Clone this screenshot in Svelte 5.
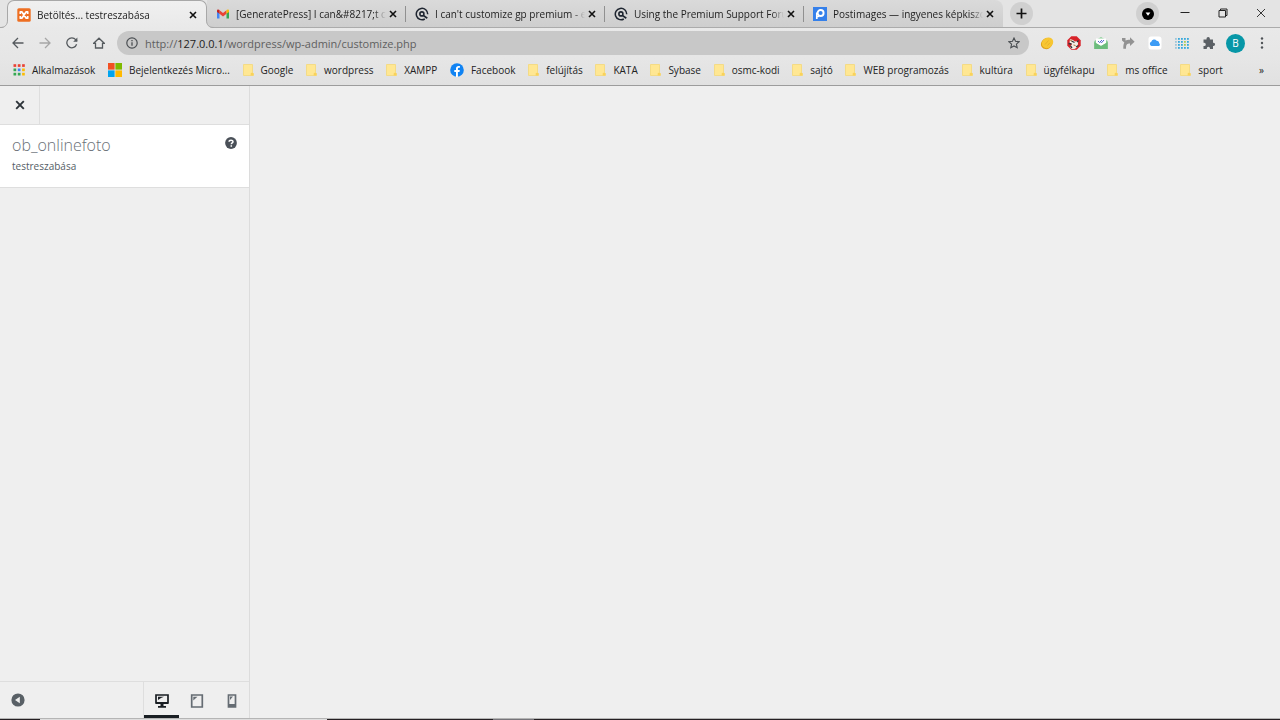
<script lang="ts">
  /**
   * App.svelte — Browser window with the WordPress customizer loading.
   *
   * Tab strip, toolbar and bookmarks bar on top, customizer sidebar
   * with an empty preview pane below.
   */

  type Tab = { title: string; icon: string };
  type Bookmark = { label: string; icon: string };

  const TABS: Tab[] = [
    { title: "Betöltés... testreszabása", icon: "xampp" },
    { title: "[GeneratePress] I can&#8217;t cu", icon: "gmail" },
    { title: "I can't customize gp premium - e", icon: "gp" },
    { title: "Using the Premium Support Foru", icon: "gp" },
    { title: "Postimages — ingyenes képkiszo", icon: "post" },
  ];

  const BOOKMARKS: Bookmark[] = [
    { label: "Alkalmazások", icon: "apps" },
    { label: "Bejelentkezés Micro...", icon: "microsoft" },
    { label: "Google", icon: "folder" },
    { label: "wordpress", icon: "folder" },
    { label: "XAMPP", icon: "folder" },
    { label: "Facebook", icon: "facebook" },
    { label: "felújítás", icon: "folder" },
    { label: "KATA", icon: "folder" },
    { label: "Sybase", icon: "folder" },
    { label: "osmc-kodi", icon: "folder" },
    { label: "sajtó", icon: "folder" },
    { label: "WEB programozás", icon: "folder" },
    { label: "kultúra", icon: "folder" },
    { label: "ügyfélkapu", icon: "folder" },
    { label: "ms office", icon: "folder" },
    { label: "sport", icon: "folder" },
  ];

  const APP_COLORS = [
    "#ea4335", "#ea4335", "#ea4335",
    "#34a853", "#4285f4", "#fbbc05",
    "#34a853", "#34a853", "#fbbc05",
  ];

  const DEVICES = ["desktop", "tablet", "mobile"] as const;

  let activeTab = $state(0);
  let device    = $state<string>("desktop");
  let url       = $state("/wordpress/wp-admin/customize.php");
</script>

{#snippet cross()}
  <svg width="8" height="8" viewBox="0 0 8 8" aria-hidden="true">
    <path d="M1 1l6 6M7 1L1 7" stroke="currentColor" stroke-width="1.6" fill="none" />
  </svg>
{/snippet}

{#snippet favicon(name: string)}
  {#if name === "xampp"}
    <svg width="14" height="14" viewBox="0 0 14 14" aria-hidden="true">
      <rect x="0.3" y="0.3" width="13.4" height="13.4" rx="1.5" fill="#ee6f22" />
      <path d="M3.300 6V3.800h1.500L9.200 10.200h1.500V8M3.300 8v2.200h1.500L9.200 3.800h1.500V6" fill="none" stroke="#fff" stroke-width="1.700" stroke-linejoin="round" />
    </svg>
  {:else if name === "gmail"}
    <svg width="14" height="14" viewBox="0 0 14 14" aria-hidden="true">
      <path d="M1 3.500v8h2.500V6z" fill="#4285f4" />
      <path d="M13 3.500v8h-2.500V6z" fill="#34a853" />
      <path d="M3.500 3.200L7 6l3.500-2.800v3.600L7 9.500 3.500 6.800z" fill="#ea4335" />
      <path d="M1 5V3.700C1 2.200 2.500 2 3.500 3v3.800z" fill="#c5221f" />
      <path d="M13 5V3.700c0-1.500-1.500-1.700-2.500-.7v3.800z" fill="#fbbc04" />
    </svg>
  {:else if name === "gp"}
    <svg width="14" height="14" viewBox="0 0 14 14" fill="none" stroke="#1e2530" aria-hidden="true">
      <path d="M9.800 12A5.700 5.700 0 1 1 12.700 7.200" stroke-width="1.500" />
      <circle cx="6.900" cy="6.900" r="2" stroke-width="1.600" />
      <path d="M8.300 8.400l4 2.900" stroke-width="1.700" />
    </svg>
  {:else if name === "post"}
    <svg width="14" height="14" viewBox="0 0 14 14" aria-hidden="true">
      <rect width="14" height="14" fill="#3580ea" />
      <circle cx="7.600" cy="6" r="3" fill="none" stroke="#fff" stroke-width="1.900" />
      <path d="M3.800 5.500V12" stroke="#fff" stroke-width="1.700" />
      <path d="M3.500 9.500h3" stroke="#fff" stroke-width="1.300" />
    </svg>
  {:else if name === "apps"}
    <svg width="12" height="12" viewBox="0 0 12 12" aria-hidden="true">
      {#each APP_COLORS as color, i}
        <rect x={(i % 3) * 4.3 + 0.5} y={Math.floor(i / 3) * 4.3 + 0.2} width="2.700" height="2.700" fill={color} />
      {/each}
    </svg>
  {:else if name === "microsoft"}
    <svg width="14" height="14" viewBox="0 0 14 14" aria-hidden="true">
      <rect width="6.600" height="6.600" fill="#f25022" />
      <rect x="7.400" width="6.600" height="6.600" fill="#7fba00" />
      <rect y="7.400" width="6.600" height="6.600" fill="#00a4ef" />
      <rect x="7.400" y="7.400" width="6.600" height="6.600" fill="#ffb900" />
    </svg>
  {:else if name === "facebook"}
    <svg width="14" height="14" viewBox="0 0 14 14" aria-hidden="true">
      <circle cx="7" cy="7" r="6.800" fill="#1083f3" />
      <path d="M6 14V9.100H4.300V7.100H6V5.600c0-1.800 1-2.700 2.600-2.700.7 0 1.300.1 1.300.1v1.700H9c-.8 0-1.100.5-1.100 1v1.400h1.900l-.3 2H7.900V14z" fill="#fff" />
    </svg>
  {:else}
    <svg width="11" height="12" viewBox="0 0 11 12" aria-hidden="true">
      <path d="M.5.500h9v8l.9.900v2.100H.5z" fill="#ffe793" stroke="#f4d878" stroke-width="0.800" />
      <path d="M7.700 11.500V9.200l1.500-.8 1.300 1v2.100z" fill="#f9d25a" />
    </svg>
  {/if}
{/snippet}

<div class="window">
  <header class="browser">
    <div class="tab-strip">
      {#each TABS as tab, i}
        <div class="tab" class:active={activeTab === i}>
          {#if activeTab === i}
            <svg class="flare left" width="8" height="8" viewBox="0 0 8 8" aria-hidden="true">
              <path d="M0 8C5 8 7.500 5.500 7.500 0H8v8z" fill="#e9e9e9" />
              <path d="M0 7.500C5 7.500 7.500 5 7.500 0" fill="none" stroke="#a8a8a8" />
            </svg>
            <svg class="flare right" width="8" height="8" viewBox="0 0 8 8" aria-hidden="true">
              <path d="M8 8C3 8 .5 5.500.5 0H0v8z" fill="#e9e9e9" />
              <path d="M8 7.500C3 7.500.5 5 .5 0" fill="none" stroke="#a8a8a8" />
            </svg>
          {/if}
          <button class="tab-title" onclick={() => (activeTab = i)}>
            {@render favicon(tab.icon)}
            <span>{tab.title}</span>
          </button>
          <button class="tab-close" aria-label="Lap bezárása">{@render cross()}</button>
        </div>
      {/each}
      <button class="new-tab" aria-label="Új lap">
        <svg width="11" height="11" viewBox="0 0 11 11" aria-hidden="true">
          <path d="M5.500.500v10M.5 5.500h10" stroke="#111" stroke-width="1.700" />
        </svg>
      </button>
      <div class="window-controls">
        <button class="tab-search" aria-label="Lapok keresése">
          <svg width="12" height="12" viewBox="0 0 12 12" aria-hidden="true">
            <circle cx="6" cy="6" r="6" fill="#000" />
            <path d="M3.600 4.500h4.800L6 7.700z" fill="#fff" />
          </svg>
        </button>
        <button aria-label="Kis méret">
          <svg width="10" height="10" viewBox="0 0 10 10"><path d="M.5 4.500h9" stroke="#222" /></svg>
        </button>
        <button aria-label="Előző méret">
          <svg width="10" height="10" viewBox="0 0 10 10" fill="none" stroke="#222">
            <path d="M1 2.500h6.500v6.500H1zM2.500 2.500V1H9v6.500H7.500" />
          </svg>
        </button>
        <button aria-label="Bezárás">
          <svg width="10" height="10" viewBox="0 0 10 10"><path d="M1 1l8 8M9 1L1 9" stroke="#222" stroke-width="0.900" /></svg>
        </button>
      </div>
    </div>

    <div class="toolbar">
      <nav class="nav-buttons">
        <button aria-label="Vissza">
          <svg width="12" height="12" viewBox="0 0 12 12" fill="none" stroke="#555a5e" stroke-width="1.300">
            <path d="M11.500 6H1.200M6 1L1 6l5 5" />
          </svg>
        </button>
        <button aria-label="Előre" disabled>
          <svg width="12" height="12" viewBox="0 0 12 12" fill="none" stroke="#a6a6a6" stroke-width="1.300">
            <path d="M.5 6h10.300M6 1l5 5-5 5" />
          </svg>
        </button>
        <button aria-label="Újratöltés">
          <svg width="12" height="12" viewBox="0 0 12 12" fill="none" stroke="#555a5e" stroke-width="1.300">
            <path d="M10.600 7.300A5 5 0 1 1 9.700 2.600L11 4" />
            <path d="M11.400.500v4.200H7.200z" fill="#555a5e" stroke="none" />
          </svg>
        </button>
        <button aria-label="Kezdőlap">
          <svg width="12" height="12" viewBox="0 0 12 12" fill="none" stroke="#555a5e" stroke-width="1.300">
            <path d="M.7 6.300L6 1.200l5.300 5.100H9.500V11h-7V6.300z" />
          </svg>
        </button>
      </nav>

      <div class="address">
        <svg width="12" height="12" viewBox="0 0 12 12" fill="none" stroke="#4a4e52" aria-hidden="true">
          <circle cx="6" cy="6" r="5.200" stroke-width="1.200" />
          <path d="M6 5.300v3.500M6 3v1.300" stroke-width="1.300" />
        </svg>
        <label for="url">http://<b>127.0.0.1</b></label>
        <input id="url" type="text" bind:value={url} spellcheck="false" />
        <button aria-label="Könyvjelző">
          <svg width="12" height="12" viewBox="0 0 12 12" fill="none" stroke="#4a4e52" stroke-width="1.100">
            <path d="M6 1l1.500 3.300 3.600.4-2.700 2.400.8 3.600L6 8.900l-3.200 1.800.8-3.600L.9 4.700l3.600-.4z" />
          </svg>
        </button>
      </div>

      <div class="extensions">
        <button aria-label="Érme">
          <svg width="14" height="14" viewBox="0 0 14 14">
            <ellipse cx="6.700" cy="7.600" rx="6" ry="5.300" transform="rotate(-35 6.700 7.600)" fill="#dc9f18" />
            <ellipse cx="7.500" cy="6.800" rx="6" ry="5" transform="rotate(-35 7.500 6.800)" fill="#f7c632" />
            <path d="M5 8.500l3.500-4M7.500 9.500L10 6.800" stroke="#e8b12a" />
          </svg>
        </button>
        <button aria-label="Blokkoló">
          <svg width="14" height="14" viewBox="0 0 14 14">
            <path d="M4.300.300h5.400l4 4v5.400l-4 4H4.300l-4-4V4.300z" fill="#d8232a" />
            <path d="M3 3l3 1 2 1.500 3-.5v3l-1 3.500-2.500 1.500H4.500L3 11l2-3-2.500-1.500z" fill="#f2eee4" />
            <path d="M1.500 7.500l3 .5M3.500 10l1.500 2M4.500 5l3 1.500M10 6l1.500-1.500M9 11l2.500-1.500" stroke="#34363a" fill="none" stroke-width="1.300" />
            <path d="M3 4l2 1M6.500 9l2 .5" stroke="#b3773d" />
          </svg>
        </button>
        <button aria-label="Levél">
          <svg width="14" height="14" viewBox="0 0 14 14">
            <path d="M.3 5L7 1l6.700 4v8H.3z" fill="#8acf98" />
            <path d="M2 2.500h10v5L7 10 2 7.500z" fill="#fff" />
            <path d="M.3 6L7 10l6.700-4v7H.3z" fill="#6cbc7c" />
            <path d="M4 5l1.500 1.500L8 4M6.800 6.300l.6.600L10 4" stroke="#5360ce" fill="none" />
          </svg>
        </button>
        <button aria-label="Megosztás">
          <svg width="14" height="14" viewBox="0 0 14 14">
            <path d="M1 2h3.500v2.500C5.500 4 7 3.800 9 3.800V1.300L13.600 5.700 9 10V7.600c-3 0-4 .7-4 5.200H2.300c0-3 .2-4.800 1-6.300L1 4.500z" fill="#929292" />
          </svg>
        </button>
        <button aria-label="iCloud">
          <svg width="14" height="14" viewBox="0 0 14 14">
            <rect x="0.500" y="0.500" width="13" height="13" rx="2.500" fill="#fff" />
            <path d="M3.500 10a2.200 2.200 0 0 1-.2-4.200A3 3 0 0 1 8.600 4.700a2.500 2.500 0 0 1 2.500 2.600A1.500 1.500 0 0 1 11 10z" fill="#3d9cf5" />
          </svg>
        </button>
        <button aria-label="Rács">
          <svg width="14" height="14" viewBox="0 0 14 14">
            {#each Array(20) as _, i}
              <rect
                x={(i % 5) * 3}
                y={Math.floor(i / 5) * 3 + 2}
                width="1.800"
                height="1.800"
                fill={i === 8 || i === 13 ? "#a9cb55" : i % 5 === 0 ? "#9fc5d8" : "#36a9dc"}
              />
            {/each}
          </svg>
        </button>
        <button aria-label="Bővítmények">
          <svg width="14" height="14" viewBox="0 0 14 14">
            <path d="M1.500 3.500H4.500V2.700a1.700 1.700 0 0 1 3.400 0v.8H11v3.200h.5a1.600 1.600 0 0 1 0 3.200H11v3.200H8v-.7a1.600 1.600 0 0 0-3.200 0v.7H1.500V10h.7a1.600 1.600 0 0 0 0-3.200h-.7z" fill="#5b6065" />
          </svg>
        </button>
      </div>
      <button class="avatar" aria-label="Profil">B</button>
      <button class="menu" aria-label="Menü">
        <svg width="4" height="12" viewBox="0 0 4 12" fill="#4f5357">
          <circle cx="2" cy="1.500" r="1.200" /><circle cx="2" cy="6" r="1.200" /><circle cx="2" cy="10.500" r="1.200" />
        </svg>
      </button>
    </div>

    <nav class="bookmarks" aria-label="Könyvjelzők">
      <div class="bookmark-list">
        {#each BOOKMARKS as bookmark}
          <a href="#bookmark">
            {@render favicon(bookmark.icon)}
            <span>{bookmark.label}</span>
          </a>
        {/each}
      </div>
      <button class="more">»</button>
    </nav>
  </header>

  <main class="customizer">
    <aside class="sidebar">
      <div class="sidebar-top">
        <button class="close" aria-label="Testreszabó bezárása">
          <svg width="10" height="10" viewBox="0 0 10 10">
            <path d="M1.200 1.200l7.600 7.600M8.800 1.200L1.200 8.800" stroke="#2c3338" stroke-width="1.900" />
          </svg>
        </button>
      </div>
      <section class="site-info">
        <div>
          <h1>ob_onlinefoto</h1>
          <p>testreszabása</p>
        </div>
        <button class="help" aria-label="Súgó">
          <svg width="12" height="12" viewBox="0 0 12 12">
            <circle cx="6" cy="6" r="5.900" fill="#4a5058" />
            <path d="M4.100 4.700C4.100 2.600 8 2.600 8 4.700c0 1.200-1.700 1.300-1.700 2.500M6.300 8.200v1.500" fill="none" stroke="#fff" stroke-width="1.500" />
          </svg>
        </button>
      </section>
      <footer class="sidebar-footer">
        <button class="collapse" aria-label="Panel elrejtése">
          <svg width="14" height="14" viewBox="0 0 14 14">
            <circle cx="7" cy="7" r="6.600" fill="#596066" />
            <path d="M8.800 3.800v6.400L4 7z" fill="#f0f0f0" />
          </svg>
        </button>
        <div class="devices">
          {#each DEVICES as name}
            <button class:selected={device === name} aria-label={name} onclick={() => (device = name)}>
              <svg width="14" height="14" viewBox="0 0 14 14" fill="none" stroke="currentColor">
                {#if name === "desktop"}
                  <path d="M1 1h12v8H1z" stroke-width="1.700" />
                  <path d="M3 2.700h6L6 4l-3 2zM1 8h12v2H1zM5.500 9.500h3v3h-3zM3 12h8v1.700H3z" fill="currentColor" stroke="none" />
                {:else if name === "tablet"}
                  <path d="M1.700 1h10.600v12H1.700z" stroke-width="1.700" />
                  <path d="M3.300 2.700h4.200L6 4 3.300 6.500z" fill="currentColor" stroke="none" />
                {:else}
                  <path d="M3.500 1h7v12h-7z" stroke-width="1.700" />
                  <path d="M4 10h6v3H4zM5 2.500h3L5 6z" fill="currentColor" stroke="none" />
                {/if}
              </svg>
            </button>
          {/each}
        </div>
      </footer>
    </aside>
    <div class="preview"></div>
  </main>

  <div class="taskbar">
    <span class="start"></span>
    <span class="search"></span>
    <span class="apps"></span>
    <span class="running"></span>
    <span class="rest"></span>
  </div>
</div>

<style>
  :global(body) {
    margin: 0;
    background: #efefef;
  }

  .window {
    display: flex;
    flex-direction: column;
    min-height: 100vh;
    font-family: "Open Sans", "Noto Sans", sans-serif;
    font-size: 10px;
    color: #222;
  }

  button {
    display: flex;
    align-items: center;
    justify-content: center;
    padding: 0;
    border: none;
    background: none;
    color: inherit;
    font: inherit;
    cursor: pointer;
  }

  svg {
    display: block;
    flex: none;
  }

  .browser {
    border-bottom: 1px solid #9c9c9c;
    background: #e6e6e6;
  }

  /* tabs */
  .tab-strip {
    display: flex;
    height: 27px;
    padding-left: 7px;
    border-bottom: 1px solid #ababab;
    background: #e4e4e4;
  }

  .tab {
    position: relative;
    display: flex;
    flex: 0 1 199px;
    align-items: center;
    box-sizing: border-box;
    min-width: 0;
    padding: 0 8px 0 9px;
    background: linear-gradient(#dadada, #cecece);
  }

  .tab:not(.active)::after {
    content: "";
    position: absolute;
    top: 6px;
    right: 0;
    width: 1px;
    height: 16px;
    background: #909090;
  }

  .tab:nth-last-of-type(2) {
    border-radius: 0 8px 0 0;
  }

  .tab:nth-last-of-type(2)::after {
    display: none;
  }

  .tab.active {
    z-index: 1;
    flex-basis: 200px;
    height: 28px;
    border: 1px solid #a8a8a8;
    border-bottom: none;
    border-radius: 7px 7px 0 0;
    background: linear-gradient(#f0f0f0, #e9e9e9);
  }

  .flare {
    position: absolute;
    bottom: 0;
  }

  .flare.left {
    right: 100%;
  }

  .flare.right {
    left: 100%;
  }

  .tab-title {
    flex: 1;
    justify-content: flex-start;
    gap: 6px;
    min-width: 0;
    height: 27px;
  }

  .tab-title span {
    flex: 1;
    overflow: hidden;
    text-align: left;
    white-space: nowrap;
    mask-image: linear-gradient(to right, #000 calc(100% - 12px), transparent);
  }

  .tab-close {
    width: 10px;
    height: 10px;
    margin-left: 2px;
    color: #111;
  }

  .new-tab,
  .tab-search {
    width: 23px;
    height: 23px;
    border-radius: 50%;
    background: #d0d0d0;
  }

  .new-tab {
    flex: none;
    margin: 2px 0 0 7px;
  }

  .window-controls {
    display: flex;
    margin-left: auto;
  }

  .window-controls button {
    width: 38px;
    height: 25px;
  }

  .window-controls .tab-search {
    width: 23px;
    height: 23px;
    margin: 2px 7px 0 0;
  }

  /* toolbar */
  .toolbar {
    display: flex;
    align-items: center;
    height: 30px;
    padding-right: 16px;
    background: linear-gradient(#e9e9e9, #e6e6e6);
  }

  .nav-buttons {
    display: flex;
    gap: 15px;
    padding: 0 12px;
  }

  .address {
    display: flex;
    flex: 1;
    align-items: center;
    height: 24px;
    padding: 0 9px;
    border-radius: 12px;
    background: #c8c8c8;
    font-size: 11px;
    color: #5f5f5f;
  }

  .address label {
    margin-left: 7px;
  }

  .address b {
    font-weight: 400;
    color: #222;
  }

  .address input {
    flex: 1;
    min-width: 0;
    padding: 0;
    border: none;
    outline: none;
    background: none;
    color: inherit;
    font: inherit;
  }

  .extensions {
    display: flex;
    gap: 13px;
    margin-left: 11px;
  }

  .avatar {
    width: 19px;
    height: 19px;
    margin-left: 10px;
    border-radius: 50%;
    background: #0797a7;
    color: #fff;
  }

  .menu {
    margin-left: 15px;
  }

  /* bookmarks */
  .bookmarks {
    display: flex;
    align-items: center;
    height: 24px;
    padding: 0 16px 3px 13px;
    background: linear-gradient(#e6e6e6, #e1e1e1);
    white-space: nowrap;
  }

  .bookmark-list {
    display: flex;
    flex: 1;
    justify-content: space-between;
  }

  .bookmarks a {
    display: flex;
    align-items: center;
    gap: 7px;
    color: inherit;
    text-decoration: none;
  }

  .more {
    margin-left: 36px;
  }

  /* customizer */
  .customizer {
    display: flex;
    flex: 1;
  }

  .sidebar {
    display: flex;
    flex: 0 0 249px;
    flex-direction: column;
    border-right: 1px solid #dcdcdc;
    background: #efefef;
  }

  .sidebar-top {
    display: flex;
    height: 38px;
    border-bottom: 1px solid #dedede;
  }

  .close {
    width: 40px;
    border-right: 1px solid #dedede;
  }

  .site-info {
    display: flex;
    align-items: flex-start;
    justify-content: space-between;
    padding: 10px 12px 14px;
    border-bottom: 1px solid #dedede;
    background: #fff;
  }

  h1 {
    margin: 0;
    font-size: 16px;
    font-weight: 300;
    line-height: 20px;
    color: #6a7077;
  }

  p {
    margin: 4px 0 0;
    line-height: 14px;
    color: #555d66;
  }

  .help {
    margin-top: 2px;
  }

  .sidebar-footer {
    display: flex;
    justify-content: space-between;
    height: 36px;
    margin-top: auto;
    border-top: 1px solid #dedede;
  }

  .collapse {
    margin-left: 11px;
  }

  .devices {
    display: flex;
    border-left: 1px solid #dedede;
  }

  .devices button {
    box-sizing: border-box;
    width: 35px;
    border-bottom: 3px solid transparent;
    padding-top: 4px;
    color: #656c73;
  }

  .devices .selected {
    border-bottom-color: #191e23;
    color: #191e23;
  }

  .preview {
    flex: 1;
    background: #efefef;
  }

  .taskbar {
    display: flex;
    height: 1px;
    border-top: 1px solid #b5b5b5;
    background: #241f22;
  }

  .start {
    flex: 0 0 40px;
  }

  .search {
    flex: 0 0 287px;
    background: #dedede;
  }

  .apps {
    flex: 0 0 166px;
  }

  .running {
    flex: 0 0 41px;
    background: #77757a;
  }

  .rest {
    flex: 1;
  }
</style>
